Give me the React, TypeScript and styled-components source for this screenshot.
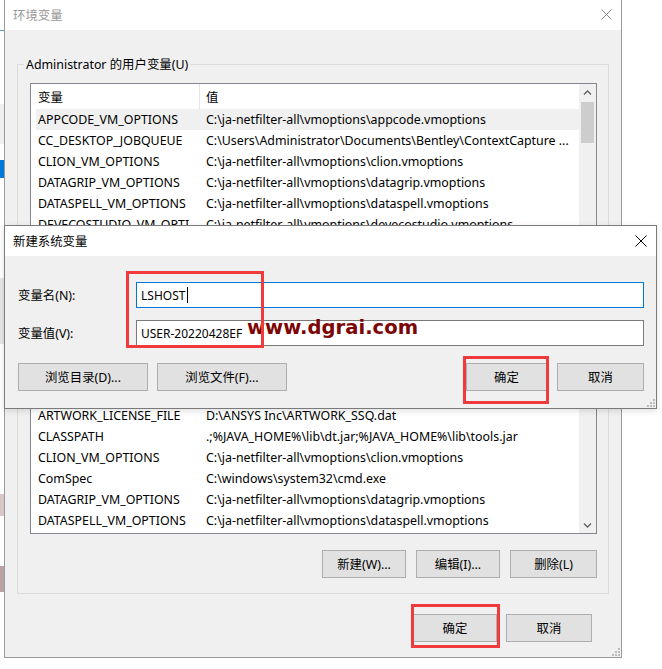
import styled, { createGlobalStyle } from "styled-components";

const GlobalStyle = createGlobalStyle`
  html, body { margin: 0; padding: 0; background: #fff; }
  body {
    font-family: "Noto Sans", "Noto Sans CJK SC", sans-serif;
    font-size: 12.4px;
    color: #000;
  }
  * { box-sizing: border-box; }
`;

const Page = styled.div`
  position: relative;
  width: 662px;
  height: 669px;
  overflow: hidden;
  display: flex;
  align-items: flex-start;
  background: #fff;
`;

const Strip = styled.div`
  width: 4px;
  flex-shrink: 0;
  display: flex;
  flex-direction: column;
`;

const StripBit = styled.div<{ $h: number; $c: string }>`
  height: ${(p) => p.$h}px;
  background: ${(p) => p.$c};
  flex-shrink: 0;
`;

const Window = styled.div`
  position: relative;
  width: 618px;
  height: 658px;
  flex-shrink: 0;
  border: 1px solid #9a9a9a;
  border-top: none;
  display: flex;
  flex-direction: column;
  background: #f0f0f0;
`;

const TitleBar = styled.div<{ $active?: boolean }>`
  height: 30px;
  flex-shrink: 0;
  background: #fff;
  display: flex;
  align-items: center;
  justify-content: space-between;
  padding: 0 9px 1px 8px;
  color: ${(p) => (p.$active ? "#000" : "#999")};
`;

const Body = styled.div`
  flex: 1;
  display: flex;
  flex-direction: column;
  padding: 34px 12px 0 12px;
`;

const GroupBox = styled.div<{ $gap?: number }>`
  border: 1px solid #dcdcdc;
  display: flex;
  flex-direction: column;
  padding: 0 11px 15px 12px;
  margin-top: ${(p) => p.$gap ?? 0}px;
  flex-shrink: 0;
`;

const GroupTitle = styled.div`
  align-self: flex-start;
  margin: -9px 0 0 -6px;
  padding: 0 2px;
  line-height: 17px;
  height: 17px;
  background: #f0f0f0;
  white-space: nowrap;
`;

const List = styled.div<{ $h: number }>`
  margin-top: 10px;
  height: ${(p) => p.$h}px;
  border: 1px solid #828790;
  background: #fff;
  display: flex;
  flex-shrink: 0;
`;

const ListMain = styled.div`
  flex: 1;
  min-width: 0;
  display: flex;
  flex-direction: column;
`;

const Header = styled.div`
  height: 25px;
  flex-shrink: 0;
  display: flex;
  padding-left: 5px;
`;

const HeaderCell = styled.div<{ $first?: boolean }>`
  display: flex;
  align-items: center;
  width: ${(p) => (p.$first ? "164px" : "auto")};
  flex: ${(p) => (p.$first ? "none" : "1")};
  padding-left: ${(p) => (p.$first ? 2 : 6)}px;
  border-right: ${(p) => (p.$first ? "1px solid #e5e5e5" : "none")};
`;

const Rows = styled.div<{ $bottom?: boolean }>`
  flex: 1;
  min-height: 0;
  overflow: hidden;
  display: flex;
  flex-direction: column;
  justify-content: ${(p) => (p.$bottom ? "flex-end" : "flex-start")};
  padding-bottom: ${(p) => (p.$bottom ? 2 : 0)}px;
`;

const Row = styled.div<{ $selected?: boolean }>`
  height: 21px;
  flex-shrink: 0;
  margin-left: 5px;
  display: flex;
  align-items: center;
  white-space: nowrap;
  background: ${(p) => (p.$selected ? "#f0f0f0" : "transparent")};
`;

const NameCell = styled.div`
  width: 164px;
  flex-shrink: 0;
  padding-left: 2px;
  overflow: hidden;
  text-overflow: ellipsis;
`;

const ValueCell = styled.div`
  flex: 1;
  min-width: 0;
  padding-left: 6px;
  overflow: hidden;
  text-overflow: ellipsis;
`;

const ScrollBar = styled.div<{ $bottom?: boolean }>`
  width: 17px;
  flex-shrink: 0;
  background: #f0f0f0;
  display: flex;
  flex-direction: column;
  justify-content: ${(p) => (p.$bottom ? "space-between" : "flex-start")};
`;

const Arrow = styled.div`
  height: 17px;
  flex-shrink: 0;
  display: flex;
  align-items: center;
  justify-content: center;
`;

const Thumb = styled.div`
  margin: 1px 2px 0 2px;
  height: 41px;
  background: #cdcdcd;
  flex-shrink: 0;
`;

const ButtonRow = styled.div<{ $gap: number; $top: number; $right?: number }>`
  display: flex;
  justify-content: flex-end;
  gap: ${(p) => p.$gap}px;
  margin-top: ${(p) => p.$top}px;
  margin-right: ${(p) => p.$right ?? 0}px;
  flex-shrink: 0;
`;

const Button = styled.div<{ $w: number }>`
  width: ${(p) => p.$w}px;
  height: 28px;
  flex-shrink: 0;
  background: #e1e1e1;
  border: 1px solid #adadad;
  display: flex;
  align-items: center;
  justify-content: center;
  white-space: nowrap;
`;

const Grip = styled.svg`
  position: absolute;
  right: 1px;
  bottom: 1px;
`;

const Dialog = styled.div`
  position: absolute;
  left: 4px;
  top: 225px;
  width: 653px;
  height: 184px;
  border: 1px solid #7a7a7a;
  background: #f0f0f0;
  display: flex;
  flex-direction: column;
  box-shadow: 0 2px 6px rgba(0, 0, 0, 0.12);
`;

const DialogBody = styled.div`
  flex: 1;
  display: flex;
  flex-direction: column;
  padding: 26px 12px 0 13px;
`;

const FieldRow = styled.div<{ $top?: number }>`
  display: grid;
  grid-template-columns: 118px 1fr;
  align-items: center;
  margin-top: ${(p) => p.$top ?? 0}px;
`;

const Input = styled.div<{ $focused?: boolean }>`
  height: 26px;
  background: #fff;
  border: 1px solid ${(p) => (p.$focused ? "#0078d7" : "#7a7a7a")};
  padding-left: 4px;
  display: flex;
  align-items: center;
  white-space: nowrap;
  font-size: 12px;
`;

const Caret = styled.span`
  display: inline-block;
  width: 1px;
  height: 16px;
  margin-left: 2px;
  background: #000;
`;

const DialogButtons = styled.div`
  display: flex;
  margin-top: 17px;
  gap: 9px;
`;

const Spacer = styled.div`
  flex: 1;
`;

const Watermark = styled.div`
  position: absolute;
  left: 247px;
  top: 318px;
  font-family: "DejaVu Sans", sans-serif;
  font-weight: bold;
  font-size: 19.6px;
  line-height: 20px;
  color: #7c0606;
  white-space: nowrap;
`;

const RedBox = styled.div`
  position: absolute;
  border: 3px solid #ef3b3b;
`;

const CloseIcon = ({ color, size }: { color: string; size: number }) => (
  <svg width={size} height={size} viewBox={`0 0 ${size} ${size}`}>
    <path d={`M0.5 0.5 L${size - 0.5} ${size - 0.5} M${size - 0.5} 0.5 L0.5 ${size - 0.5}`} stroke={color} strokeWidth="1" fill="none" />
  </svg>
);

const Chevron = ({ down }: { down?: boolean }) => (
  <svg width="9" height="6" viewBox="0 0 9 6">
    <path d={down ? "M1 1.5 L4.5 5 L8 1.5" : "M1 4.5 L4.5 1 L8 4.5"} stroke="#606060" strokeWidth="1.3" fill="none" />
  </svg>
);

const GripIcon = () => (
  <Grip width="8" height="8" viewBox="0 0 8 8">
    {[
      [6, 0],
      [3, 3],
      [6, 3],
      [0, 6],
      [3, 6],
      [6, 6],
    ].map(([x, y]) => (
      <rect key={`${x}-${y}`} x={x} y={y} width="2" height="2" fill="#bcbcbc" />
    ))}
  </Grip>
);

const VM = "C:\\ja-netfilter-all\\vmoptions\\";

const userVars = [
  { name: "APPCODE_VM_OPTIONS", value: VM + "appcode.vmoptions" },
  { name: "CC_DESKTOP_JOBQUEUE", value: "C:\\Users\\Administrator\\Documents\\Bentley\\ContextCapture ..." },
  { name: "CLION_VM_OPTIONS", value: VM + "clion.vmoptions" },
  { name: "DATAGRIP_VM_OPTIONS", value: VM + "datagrip.vmoptions" },
  { name: "DATASPELL_VM_OPTIONS", value: VM + "dataspell.vmoptions" },
  { name: "DEVECOSTUDIO_VM_OPTIONS", value: VM + "devecostudio.vmoptions" },
  { name: "GATEWAY_VM_OPTIONS", value: VM + "gateway.vmoptions" },
];

const systemVars = [
  { name: "ANSYS_SYSDIR", value: "winx64" },
  { name: "ANSYSLMD_LICENSE_FILE", value: "1055@localhost" },
  { name: "ARTWORK_LICENSE_FILE", value: "D:\\ANSYS Inc\\ARTWORK_SSQ.dat" },
  { name: "CLASSPATH", value: ".;%JAVA_HOME%\\lib\\dt.jar;%JAVA_HOME%\\lib\\tools.jar" },
  { name: "CLION_VM_OPTIONS", value: VM + "clion.vmoptions" },
  { name: "ComSpec", value: "C:\\windows\\system32\\cmd.exe" },
  { name: "DATAGRIP_VM_OPTIONS", value: VM + "datagrip.vmoptions" },
  { name: "DATASPELL_VM_OPTIONS", value: VM + "dataspell.vmoptions" },
];

const strip = [
  { h: 30, c: "#ffffff" },
  { h: 1, c: "#5a9bbf" },
  { h: 73, c: "#ffffff" },
  { h: 40, c: "#eeeeee" },
  { h: 16, c: "#ffffff" },
  { h: 18, c: "#0078d7" },
  { h: 100, c: "#ffffff" },
  { h: 66, c: "#e6e6e6" },
  { h: 150, c: "#ffffff" },
  { h: 22, c: "#d9c7c7" },
  { h: 50, c: "#ffffff" },
  { h: 26, c: "#b9a3a3" },
  { h: 77, c: "#ffffff" },
];

export default function App() {
  return (
    <>
      <GlobalStyle />
      <Page>
        <Strip>
          {strip.map((s, i) => (
            <StripBit key={i} $h={s.h} $c={s.c} />
          ))}
        </Strip>

        <Window>
          <TitleBar>
            <span>环境变量</span>
            <CloseIcon color="#8a8a8a" size={11} />
          </TitleBar>
          <Body>
            <GroupBox>
              <GroupTitle>Administrator 的用户变量(U)</GroupTitle>
              <List $h={171}>
                <ListMain>
                  <Header>
                    <HeaderCell $first>变量</HeaderCell>
                    <HeaderCell>值</HeaderCell>
                  </Header>
                  <Rows>
                    {userVars.map((v, i) => (
                      <Row key={v.name} $selected={i === 0}>
                        <NameCell>{v.name}</NameCell>
                        <ValueCell>{v.value}</ValueCell>
                      </Row>
                    ))}
                  </Rows>
                </ListMain>
                <ScrollBar>
                  <Arrow>
                    <Chevron />
                  </Arrow>
                  <Thumb />
                </ScrollBar>
              </List>
              <ButtonRow $gap={10} $top={16}>
                <Button $w={84}>新建(N)...</Button>
                <Button $w={84}>编辑(E)...</Button>
                <Button $w={87}>删除(D)</Button>
              </ButtonRow>
            </GroupBox>

            <GroupBox $gap={15}>
              <GroupTitle>系统变量(S)</GroupTitle>
              <List $h={186}>
                <ListMain>
                  <Header>
                    <HeaderCell $first>变量</HeaderCell>
                    <HeaderCell>值</HeaderCell>
                  </Header>
                  <Rows $bottom>
                    {systemVars.map((v) => (
                      <Row key={v.name}>
                        <NameCell>{v.name}</NameCell>
                        <ValueCell>{v.value}</ValueCell>
                      </Row>
                    ))}
                  </Rows>
                </ListMain>
                <ScrollBar $bottom>
                  <Arrow>
                    <Chevron />
                  </Arrow>
                  <Arrow>
                    <Chevron down />
                  </Arrow>
                </ScrollBar>
              </List>
              <ButtonRow $gap={10} $top={16}>
                <Button $w={84}>新建(W)...</Button>
                <Button $w={84}>编辑(I)...</Button>
                <Button $w={87}>删除(L)</Button>
              </ButtonRow>
            </GroupBox>

            <ButtonRow $gap={9} $top={20} $right={17}>
              <Button $w={84}>确定</Button>
              <Button $w={86}>取消</Button>
            </ButtonRow>
          </Body>
          <GripIcon />
        </Window>

        <Dialog>
          <TitleBar $active>
            <span>新建系统变量</span>
            <CloseIcon color="#000" size={12} />
          </TitleBar>
          <DialogBody>
            <FieldRow>
              <span>变量名(N):</span>
              <Input $focused>
                LSHOST
                <Caret />
              </Input>
            </FieldRow>
            <FieldRow $top={12}>
              <span>变量值(V):</span>
              <Input>USER-20220428EF</Input>
            </FieldRow>
            <DialogButtons>
              <Button $w={130}>浏览目录(D)...</Button>
              <Button $w={130}>浏览文件(F)...</Button>
              <Spacer />
              <Button $w={81}>确定</Button>
              <Button $w={87} style={{ marginLeft: 1 }}>
                取消
              </Button>
            </DialogButtons>
          </DialogBody>
          <GripIcon />
        </Dialog>

        <Watermark>www.dgrai.com</Watermark>

        <RedBox style={{ left: 126, top: 271, width: 138, height: 77 }} />
        <RedBox style={{ left: 463, top: 356, width: 86, height: 48 }} />
        <RedBox style={{ left: 411, top: 604, width: 89, height: 44 }} />
      </Page>
    </>
  );
}
